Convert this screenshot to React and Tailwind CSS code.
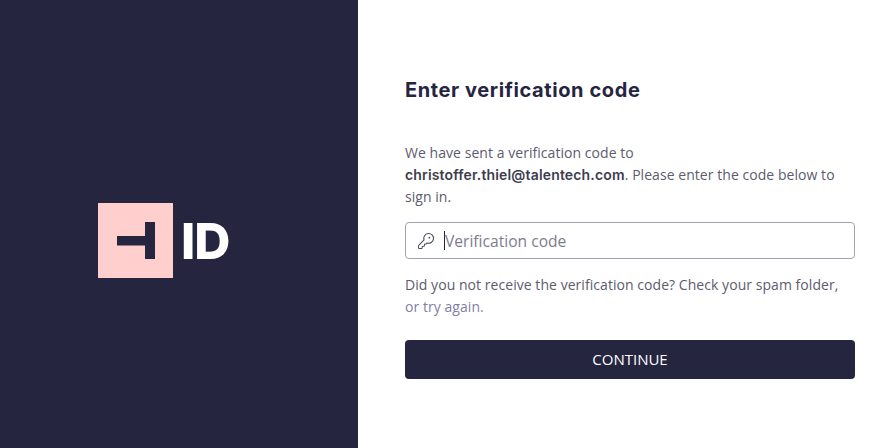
import { KeyRound } from "lucide-react";

function Logo() {
    return (
        <div className="flex items-center">
            <div className="h-[75px] w-[75px] bg-[#ffcfcd]">
                <svg width="75" height="75" viewBox="0 0 75 75">
                    <rect x="19" y="33" width="28" height="9.5" fill="#25253f" />
                    <rect x="47" y="19" width="10" height="37" fill="#25253f" />
                </svg>
            </div>
            <span className="ml-[8px] font-['Inter',sans-serif] text-[50px] leading-none font-extrabold tracking-[-1px] text-white">
                ID
            </span>
        </div>
    );
}

function App() {
    return (
        <div className="flex h-[448px] w-[885px] bg-white font-['Open_Sans',sans-serif]">
            <div className="flex w-[358px] items-center pl-[98px] pt-[33px] bg-[#25253f]">
                <Logo />
            </div>

            <div className="w-[450px] ml-[47px] pt-[78px]">
                <h1 className="font-['Inter',sans-serif] text-[20px] leading-6 font-bold tracking-[0.6px] text-[#25253f]">
                    Enter verification code
                </h1>

                <p className="mt-[40px] text-[14px] leading-[22px] tracking-[0.05px] text-[#5c5c6e]">
                    We have sent a verification code to
                    <br />
                    <span className="font-['Inter',sans-serif] tracking-[0.16px] text-[#3d3d4e] font-semibold">
                        christoffer.thiel@talentech.com
                    </span>
                    . Please enter the code below to sign in.
                </p>

                <div className="mt-[14px] flex h-[37px] items-center rounded border border-[#a2a2b0] pl-[11px]">
                    <KeyRound size={18} strokeWidth={1.4} className="text-[#4c4c5e]" />
                    <div className="ml-[9px] h-[19px] w-px bg-[#25253f]" />
                    <span className="pt-[2px] text-[15.6px] text-[#7d7d8c]">Verification code</span>
                </div>

                <p className="mt-[15px] text-[14px] leading-[22px] tracking-[0.05px] text-[#5c5c6e]">
                    Did you not receive the verification code? Check your spam folder,
                    <br />
                    <span className="text-[#7f7fa6]">or try again.</span>
                </p>

                <button className="mt-[22px] h-[39px] w-full rounded bg-[#25253f] text-[15px] text-white">
                    CONTINUE
                </button>
            </div>
        </div>
    );
}

export default App;
